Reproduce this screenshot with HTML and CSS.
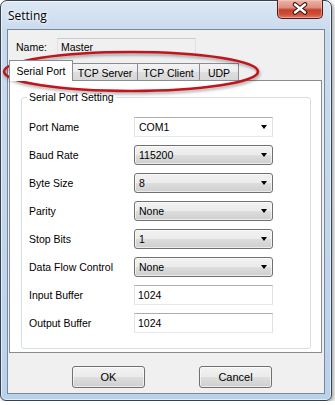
FILE: index.html
```html
<!DOCTYPE html>
<html lang="en">
<head>
    <meta charset="UTF-8">
    <title>Setting</title>
    <link rel="stylesheet" href="styles.css">
</head>
<body>
    <div class="window">
        <div class="titlebar">
            <span class="title">Setting</span>
            <div class="close-btn">
                <svg width="46" height="19" viewBox="0 0 46 19">
                    <path d="M18 5.5 L28 13.5 M28 5.5 L18 13.5" stroke="#3b1410" stroke-width="4.6" stroke-linecap="round"/>
                    <path d="M18 5.5 L28 13.5 M28 5.5 L18 13.5" stroke="#ffffff" stroke-width="2.4" stroke-linecap="round"/>
                </svg>
            </div>
        </div>

        <div class="client">
            <div class="name-row">
                <label>Name:</label>
                <input class="textbox readonly" value="Master" readonly>
            </div>

            <div class="tabs">
                <div class="tab active">Serial Port</div>
                <div class="tab tcp-server">TCP Server</div>
                <div class="tab tcp-client">TCP Client</div>
                <div class="tab udp">UDP</div>
            </div>

            <div class="tab-page">
                <fieldset class="group">
                    <legend>Serial Port Setting</legend>
                    <div class="field">
                        <label>Port Name</label>
                        <div class="combo editable"><span>COM1</span><i class="arrow"></i></div>
                    </div>
                    <div class="field">
                        <label>Baud Rate</label>
                        <div class="combo"><span>115200</span><i class="arrow"></i></div>
                    </div>
                    <div class="field">
                        <label>Byte Size</label>
                        <div class="combo"><span>8</span><i class="arrow"></i></div>
                    </div>
                    <div class="field">
                        <label>Parity</label>
                        <div class="combo"><span>None</span><i class="arrow"></i></div>
                    </div>
                    <div class="field">
                        <label>Stop Bits</label>
                        <div class="combo"><span>1</span><i class="arrow"></i></div>
                    </div>
                    <div class="field">
                        <label>Data Flow Control</label>
                        <div class="combo"><span>None</span><i class="arrow"></i></div>
                    </div>
                    <div class="field">
                        <label>Input Buffer</label>
                        <input class="textbox" value="1024">
                    </div>
                    <div class="field">
                        <label>Output Buffer</label>
                        <input class="textbox" value="1024">
                    </div>
                </fieldset>
            </div>

            <div class="buttons">
                <button>OK</button>
                <button>Cancel</button>
            </div>
        </div>
    </div>

    <svg class="callout" width="335" height="405" viewBox="0 0 335 405">
        <ellipse cx="131" cy="71.5" rx="127" ry="19.5" fill="none" stroke="#c3141c" stroke-width="2.6"/>
    </svg>
</body>
</html>
```

FILE: styles.css
```css
body {
    margin: 0;
    background: #fff;
    font-family: "Liberation Sans", Arial, sans-serif;
    font-size: 10.5px;
    color: #000;
}
.window {
    width: 332px;
    height: 401px;
    box-sizing: border-box;
    border: 1px solid #36424e;
    border-radius: 7px 7px 6px 6px;
    background: linear-gradient(180deg, #dce7f3 0, #c9dbef 30px, #b9d2ec 100%);
    padding: 0 6px 6px;
    box-shadow: inset 0 0 0 1px rgba(255,255,255,0.6), 2px 2px 4px rgba(0,0,0,0.35);
    display: flex;
    flex-direction: column;
}
.titlebar {
    height: 28px;
    flex: none;
    display: flex;
    align-items: flex-start;
    justify-content: space-between;
}
.title {
    font-family: "Open Sans", "Noto Sans", sans-serif;
    font-size: 12px;
    line-height: 16px;
    margin: 7px 0 0 1px;
    text-shadow: 0 0 5px #fff, 0 0 3px #fff;
}
.close-btn {
    width: 46px;
    height: 19px;
    box-sizing: border-box;
    margin: -1px 2px 0 0;
    border: 1px solid #4f1b15;
    border-top: none;
    border-radius: 0 0 5px 5px;
    background: linear-gradient(180deg, #ebb4a8 0%, #dc8f80 42%, #c63f2b 55%, #cf4f38 80%, #de7a64 100%);
    box-shadow: inset 0 0 0 1px rgba(255,215,205,0.45);
}
.close-btn svg {
    display: block;
    margin: -1px 0 0 -1px;
}
.client {
    flex: 1;
    border: 1px solid #7a8896;
    background: #f0f0f0;
    display: flex;
    flex-direction: column;
}
.name-row {
    display: flex;
    align-items: center;
    margin: 8px 0 0 8px;
}
.name-row label {
    width: 41px;
}
.textbox {
    box-sizing: border-box;
    width: 139px;
    height: 20px;
    margin: 0;
    padding: 0 3px;
    border: 1px solid;
    border-color: #abadb3 #dbdfe6 #e3e9ef #e2e3ea;
    background: #fff;
    font: inherit;
    color: #000;
    outline: none;
}
.textbox.readonly {
    height: 18px;
    background: #f0f0f0;
    border-color: #c9cbd0 #e0e2e6 #e6e9ed #e2e3ea;
}
.tabs {
    display: flex;
    align-items: flex-end;
    height: 20px;
    margin: 4px 0 0 1px;
}
.tab {
    box-sizing: border-box;
    height: 17px;
    border: 1px solid #898c95;
    border-bottom: none;
    background: linear-gradient(180deg, #f3f3f3 0%, #ebebeb 50%, #dedede 51%, #d7d7d7 100%);
    display: flex;
    align-items: center;
    justify-content: center;
    padding-top: 1px;
    margin-left: -1px;
}
.tab.active {
    position: relative;
    z-index: 1;
    width: 64px;
    height: 21px;
    margin-left: 0;
    margin-bottom: -1px;
    padding-top: 0;
    padding-bottom: 1px;
    background: #fff;
}
.tab.tcp-server { width: 66px; }
.tab.tcp-client { width: 63px; }
.tab.udp { width: 40px; }
.tab-page {
    box-sizing: border-box;
    width: 313px;
    height: 273px;
    margin-left: 1px;
    border: 1px solid #898c95;
    background: #fff;
}
.group {
    width: 290px;
    box-sizing: border-box;
    margin: 10px 0 0 11px;
    padding: 13px 0 15px 5px;
    border: 1px solid #d5dfe5;
    border-radius: 3px;
}
.group legend {
    padding: 0 2px;
    line-height: 13px;
}
.field {
    display: flex;
    align-items: center;
    height: 20px;
    padding-left: 2px;
    margin-bottom: 8px;
}
.field:last-child {
    margin-bottom: 0;
}
.field label {
    width: 105px;
}
.combo {
    box-sizing: border-box;
    width: 139px;
    height: 20px;
    display: flex;
    align-items: center;
    justify-content: space-between;
    padding: 0 5px 0 4px;
    border: 1px solid #707070;
    border-radius: 3px;
    background: linear-gradient(180deg, #f2f2f2 0%, #ebebeb 50%, #dddddd 51%, #cfcfcf 100%);
    box-shadow: inset 0 0 0 1px rgba(255,255,255,0.6);
}
.combo.editable {
    border-radius: 0;
    border-color: #abadb3 #dbdfe6 #e3e9ef #e2e3ea;
    background: #fff;
    box-shadow: none;
}
.arrow {
    width: 0;
    height: 0;
    border-left: 3.5px solid transparent;
    border-right: 3.5px solid transparent;
    border-top: 4px solid #000;
}
.buttons {
    display: flex;
    gap: 54px;
    margin: 13px 0 0 64px;
}
button {
    box-sizing: border-box;
    width: 73px;
    height: 22px;
    margin: 0;
    padding: 0;
    border: 1px solid #707070;
    border-radius: 3px;
    background: linear-gradient(180deg, #f2f2f2 0%, #ebebeb 50%, #dddddd 51%, #cfcfcf 100%);
    box-shadow: inset 0 0 0 1px rgba(255,255,255,0.6);
    font: inherit;
    font-size: 11px;
    color: #000;
}
.callout {
    position: absolute;
    left: 0;
    top: 0;
    pointer-events: none;
    filter: drop-shadow(1px 2px 1.5px rgba(0,0,0,0.35));
}
```
